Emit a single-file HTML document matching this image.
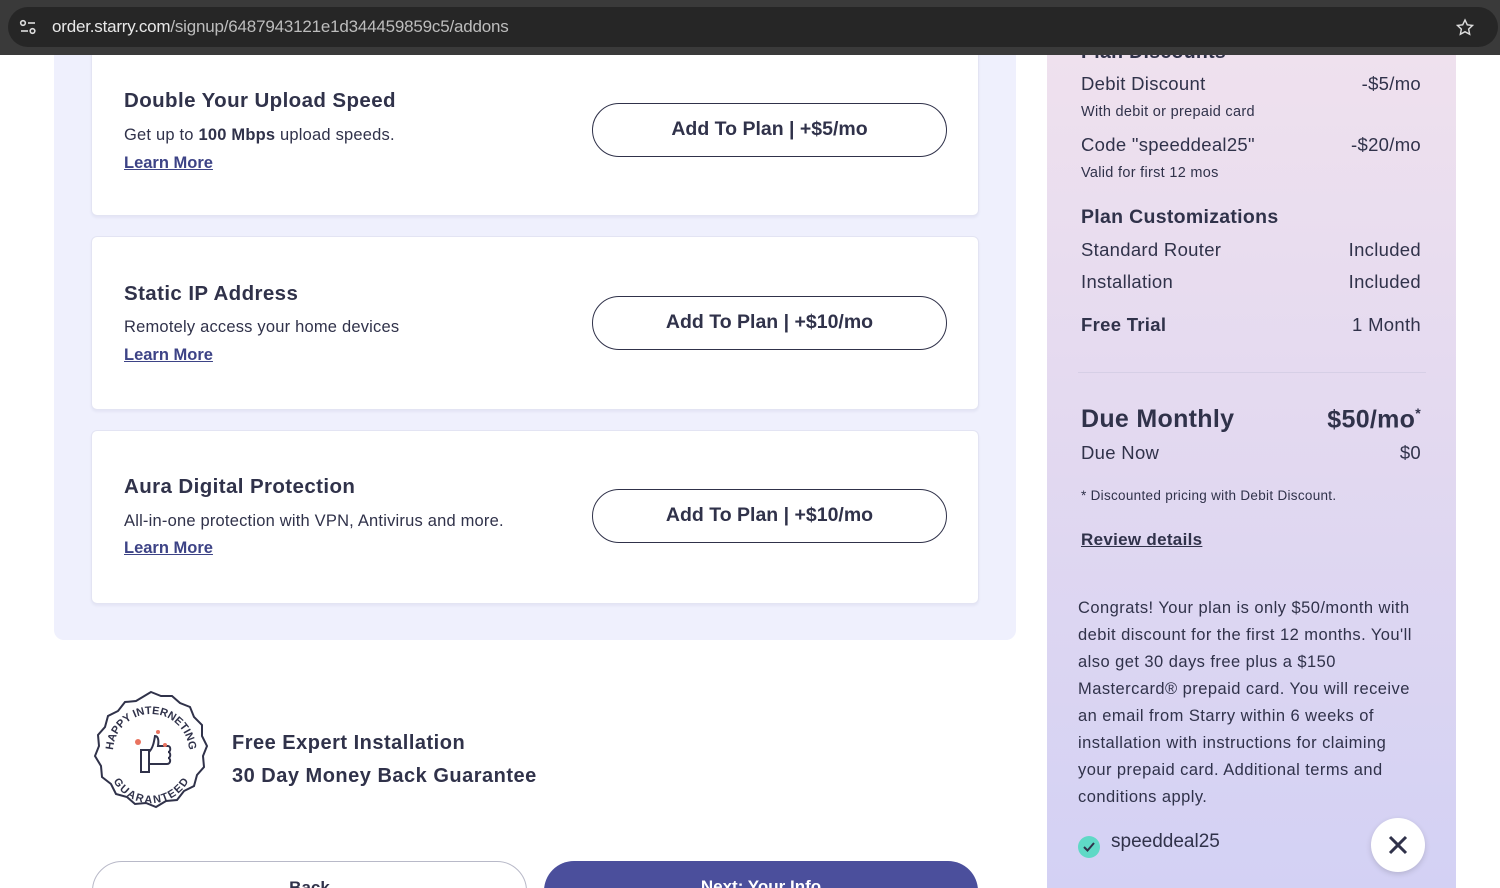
<!DOCTYPE html>
<html><head><meta charset="utf-8"><style>
*{box-sizing:border-box;margin:0;padding:0}
html,body{width:1500px;height:888px;overflow:hidden}
body{background:#fff;font-family:"Liberation Sans",sans-serif;color:#30324a;position:relative}
.bar{position:absolute;left:0;top:0;width:1500px;height:55px;background:#3a3a3a;z-index:10}
.pill{position:absolute;left:8px;top:7px;width:1490px;height:40px;border-radius:20px;background:#262626}
.url{position:absolute;left:52px;top:17px;font-size:17px;color:#e8e8e8;letter-spacing:-0.2px}
.url span{color:#bdbdbd}
.main{position:absolute;left:54px;top:40px;width:962px;height:600px;background:#eff0fd;border-radius:0 0 10px 10px}
.card{position:absolute;left:37px;width:888px;background:#fff;border:1px solid #e3e4f3;border-radius:6px;box-shadow:0 2px 2px #e4e5f5}
.card h3{position:absolute;left:32px;font-size:20.5px;font-weight:bold;letter-spacing:0.4px;color:#30324a}
.card p{position:absolute;left:32px;font-size:16.5px;color:#30324a;letter-spacing:0.2px}
.card a{position:absolute;left:32px;font-size:16.5px;color:#3d4386;text-decoration:underline;font-weight:bold}
.btn{position:absolute;left:500px;width:355px;height:54px;border:1.5px solid #30324a;border-radius:27px;text-align:center;line-height:51px;font-size:19.5px;font-weight:bold;color:#30324a}
.side{position:absolute;left:1047px;top:55px;width:409px;height:833px;background:linear-gradient(180deg,#efe1ee 0%,#e3d9f0 45%,#d3d1f4 100%);overflow:hidden}
.r{position:absolute;left:34px;right:35px;font-size:18.5px;color:#30324a;letter-spacing:0.3px}
.r b{font-weight:normal;float:right}
.s{position:absolute;left:34px;font-size:14.5px;color:#30324a;letter-spacing:0.3px}
.h{position:absolute;left:34px;font-size:19.5px;font-weight:bold;color:#30324a;letter-spacing:0.3px}
</style></head><body>
<div class="bar"><div class="pill"></div>
<svg style="position:absolute;left:19px;top:19px" width="18" height="16" viewBox="0 0 18 16" fill="none" stroke="#ddd" stroke-width="1.6"><circle cx="4" cy="4" r="2.3"/><line x1="9" y1="4" x2="16" y2="4"/><line x1="2" y1="12" x2="9" y2="12"/><circle cx="13.5" cy="12" r="2.3"/></svg>
<div class="url">order.starry.com<span>/signup/6487943121e1d344459859c5/addons</span></div>
<svg style="position:absolute;left:1455px;top:18px" width="20" height="19" viewBox="0 0 24 24" fill="none" stroke="#ddd" stroke-width="1.8"><path d="M12 2.5l2.9 6.1 6.6.8-4.9 4.6 1.3 6.6L12 17.3l-5.9 3.3 1.3-6.6-4.9-4.6 6.6-.8z"/></svg>
</div>
<div class="main">
 <div class="card" style="top:-10px;height:186px">
  <h3 style="top:58px">Double Your Upload Speed</h3>
  <p style="top:95px">Get up to <strong>100 Mbps</strong> upload speeds.</p>
  <a style="top:123px">Learn More</a>
  <div class="btn" style="top:72px">Add To Plan | +$5/mo</div>
 </div>
 <div class="card" style="top:196px;height:174px">
  <h3 style="top:45px">Static IP Address</h3>
  <p style="top:81px">Remotely access your home devices</p>
  <a style="top:109px">Learn More</a>
  <div class="btn" style="top:59px">Add To Plan | +$10/mo</div>
 </div>
 <div class="card" style="top:390px;height:174px">
  <h3 style="top:44px">Aura Digital Protection</h3>
  <p style="top:81px">All-in-one protection with VPN, Antivirus and more.</p>
  <a style="top:108px">Learn More</a>
  <div class="btn" style="top:58px">Add To Plan | +$10/mo</div>
 </div>
</div>
<svg style="position:absolute;left:91px;top:690px" width="120" height="120" viewBox="0 0 120 120">
<defs><path id="ta" d="M22 62 A38 38 0 0 1 98 62"/><path id="tb" d="M24 70 A36 36 0 0 0 96 70"/></defs>
<path d="M60 2 L70 6 L81 6 L89 13 L99 17 L103 27 L111 35 L111 46 L116 56 L112 66 L113 77 L106 85 L103 96 L93 101 L86 110 L75 111 L65 117 L55 113 L44 114 L36 107 L25 104 L20 94 L11 87 L10 76 L4 66 L8 56 L7 45 L14 37 L17 26 L27 21 L34 12 L45 11 Z" fill="#fff" stroke="#30324a" stroke-width="2"/>
<text font-size="11" font-weight="bold" fill="#30324a" font-family="Liberation Sans"><textPath href="#ta" startOffset="50%" text-anchor="middle">HAPPY INTERNETING</textPath></text>
<text font-size="11" font-weight="bold" fill="#30324a" font-family="Liberation Sans"><textPath href="#tb" startOffset="50%" text-anchor="middle" dominant-baseline="hanging">GUARANTEED</textPath></text>
<path d="M50 60h8v22h-8zM58 62c4-4 5-10 6-16 3 0 4 4 3 10h10c3 0 3 6 0 6 3 0 3 6 0 6 3 0 3 6-1 6h-18z" fill="none" stroke="#30324a" stroke-width="2"/>
<circle cx="47" cy="52" r="3" fill="#e9735f"/><circle cx="67" cy="42" r="2" fill="#e9735f"/><circle cx="74" cy="55" r="2" fill="#e9735f"/>
</svg>
<div style="position:absolute;left:232px;top:732px;font-size:20px;font-weight:bold;letter-spacing:0.5px;color:#30324a">Free Expert Installation</div>
<div style="position:absolute;left:232px;top:765px;font-size:20px;font-weight:bold;letter-spacing:0.5px;color:#30324a">30 Day Money Back Guarantee</div>
<div style="position:absolute;left:92px;top:861px;width:435px;height:60px;border:1.5px solid #b8b9c8;border-radius:30px;text-align:center;padding-top:16px;font-size:17px;font-weight:bold">Back</div>
<div style="position:absolute;left:544px;top:861px;width:434px;height:60px;background:#4b4f9c;border-radius:30px;text-align:center;padding-top:16px;font-size:17px;font-weight:bold;color:#fff">Next: Your Info</div>
<div class="side">
 <div class="h" style="top:-14px">Plan Discounts</div>
 <div class="r" style="top:18px">Debit Discount<b>-$5/mo</b></div>
 <div class="s" style="top:49px">With debit or prepaid card</div>
 <div class="r" style="top:79px">Code "speeddeal25"<b>-$20/mo</b></div>
 <div class="s" style="top:110px">Valid for first 12 mos</div>
 <div class="h" style="top:151px">Plan Customizations</div>
 <div class="r" style="top:184px">Standard Router<b>Included</b></div>
 <div class="r" style="top:216px">Installation<b>Included</b></div>
 <div class="r" style="top:259px;font-weight:bold">Free Trial<b style="font-weight:normal">1 Month</b></div>
 <div style="position:absolute;left:31px;right:30px;top:317px;border-top:1px solid #d6cfe6"></div>
 <div class="r" style="top:350px;font-size:25px;font-weight:bold">Due Monthly<b style="font-weight:bold">$50/mo<sup style="font-size:14px">*</sup></b></div>
 <div class="r" style="top:387px">Due Now<b>$0</b></div>
 <div class="s" style="top:433px;font-size:13.5px">* Discounted pricing with Debit Discount.</div>
 <div class="s" style="top:475px;font-size:17px;font-weight:bold;text-decoration:underline">Review details</div>
 <div style="position:absolute;left:31px;width:346px;top:540px;font-size:16.5px;line-height:27px;letter-spacing:0.45px;color:#30324a">Congrats! Your plan is only $50/month with debit discount for the first 12 months. You'll also get 30 days free plus a $150 Mastercard® prepaid card. You will receive an email from Starry within 6 weeks of installation with instructions for claiming your prepaid card. Additional terms and conditions apply.</div>
 <div style="position:absolute;left:31px;top:781px;width:22px;height:22px;border-radius:50%;background:#5fd9c6"></div>
 <svg style="position:absolute;left:35px;top:786px" width="14" height="12" viewBox="0 0 14 12"><path d="M2 6l3.5 3.5L12 2" fill="none" stroke="#30324a" stroke-width="2"/></svg>
 <div style="position:absolute;left:64px;top:776px;font-size:19px;color:#30324a">speeddeal25</div>
 <div style="position:absolute;left:324px;top:763px;width:54px;height:54px;border-radius:50%;background:#fff;box-shadow:0 2px 6px rgba(0,0,0,.15)"></div>
 <svg style="position:absolute;left:340px;top:779px" width="22" height="22" viewBox="0 0 22 22"><path d="M3 3l16 16M19 3L3 19" stroke="#30324a" stroke-width="3"/></svg>
</div>
</body></html>
